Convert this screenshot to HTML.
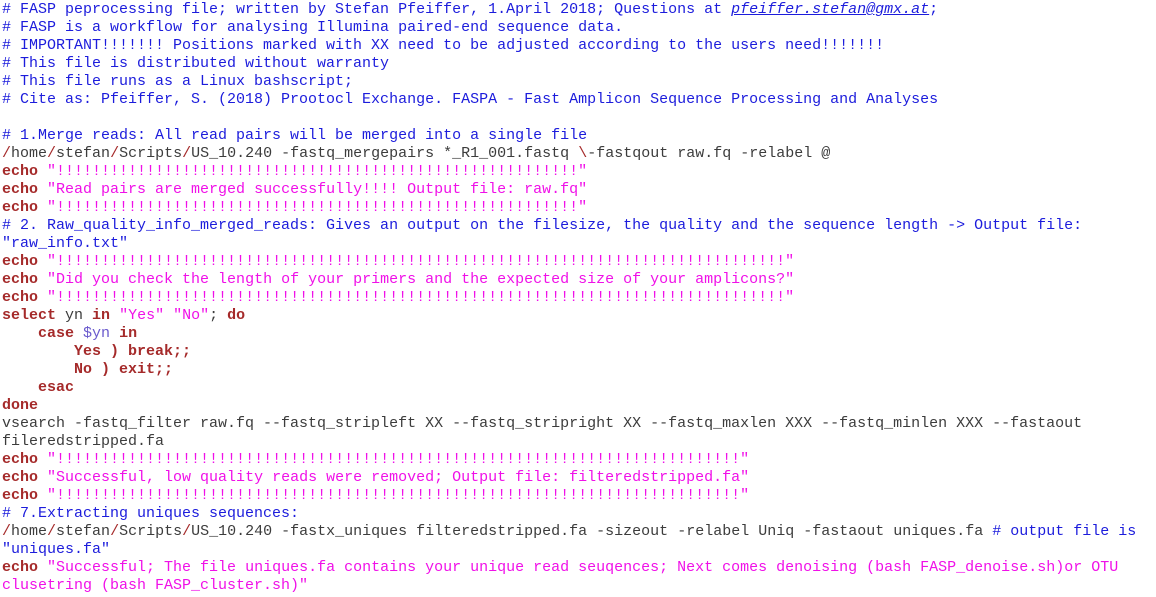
<!DOCTYPE html>
<html><head><meta charset="utf-8"><style>
html,body{margin:0;padding:0;background:#fff;width:1156px;height:597px;overflow:hidden}
pre{margin:0;padding:1px 0 0 2px;font-family:"Liberation Mono",monospace;font-size:15px;line-height:18px;color:#3c3c3c;white-space:pre}
.c{color:#1c1cdc}.s{color:#f010e8}.k{color:#a52a2a;font-weight:bold}.p{color:#a52a2a}.v{color:#6a5acd}
.e{font-style:italic;text-decoration:underline}
</style></head><body><pre><span class="c"># FASP peprocessing file; written by Stefan Pfeiffer, 1.April 2018; Questions at <span class="e">pfeiffer.stefan@gmx.at</span>;
# FASP is a workflow for analysing Illumina paired-end sequence data.
# IMPORTANT!!!!!!! Positions marked with XX need to be adjusted according to the users need!!!!!!!
# This file is distributed without warranty
# This file runs as a Linux bashscript;
# Cite as: Pfeiffer, S. (2018) Prootocl Exchange. FASPA - Fast Amplicon Sequence Processing and Analyses</span>

<span class="c"># 1.Merge reads: All read pairs will be merged into a single file</span>
<span class="p">/</span>home<span class="p">/</span>stefan<span class="p">/</span>Scripts<span class="p">/</span>US_10.240 -fastq_mergepairs *_R1_001.fastq <span class="p">\</span>-fastqout raw.fq -relabel @
<span class="k">echo</span> <span class="s">"!!!!!!!!!!!!!!!!!!!!!!!!!!!!!!!!!!!!!!!!!!!!!!!!!!!!!!!!!!"</span>
<span class="k">echo</span> <span class="s">"Read pairs are merged successfully!!!! Output file: raw.fq"</span>
<span class="k">echo</span> <span class="s">"!!!!!!!!!!!!!!!!!!!!!!!!!!!!!!!!!!!!!!!!!!!!!!!!!!!!!!!!!!"</span>
<span class="c"># 2. Raw_quality_info_merged_reads: Gives an output on the filesize, the quality and the sequence length -&gt; Output file:
"raw_info.txt"</span>
<span class="k">echo</span> <span class="s">"!!!!!!!!!!!!!!!!!!!!!!!!!!!!!!!!!!!!!!!!!!!!!!!!!!!!!!!!!!!!!!!!!!!!!!!!!!!!!!!!!"</span>
<span class="k">echo</span> <span class="s">"Did you check the length of your primers and the expected size of your amplicons?"</span>
<span class="k">echo</span> <span class="s">"!!!!!!!!!!!!!!!!!!!!!!!!!!!!!!!!!!!!!!!!!!!!!!!!!!!!!!!!!!!!!!!!!!!!!!!!!!!!!!!!!"</span>
<span class="k">select</span> yn <span class="k">in</span> <span class="s">"Yes"</span> <span class="s">"No"</span>; <span class="k">do</span>
    <span class="k">case</span> <span class="v">$yn</span> <span class="k">in</span>
        <span class="k">Yes ) break;;</span>
        <span class="k">No ) exit;;</span>
    <span class="k">esac</span>
<span class="k">done</span>
vsearch -fastq_filter raw.fq --fastq_stripleft XX --fastq_stripright XX --fastq_maxlen XXX --fastq_minlen XXX --fastaout
fileredstripped.fa
<span class="k">echo</span> <span class="s">"!!!!!!!!!!!!!!!!!!!!!!!!!!!!!!!!!!!!!!!!!!!!!!!!!!!!!!!!!!!!!!!!!!!!!!!!!!!!"</span>
<span class="k">echo</span> <span class="s">"Successful, low quality reads were removed; Output file: filteredstripped.fa"</span>
<span class="k">echo</span> <span class="s">"!!!!!!!!!!!!!!!!!!!!!!!!!!!!!!!!!!!!!!!!!!!!!!!!!!!!!!!!!!!!!!!!!!!!!!!!!!!!"</span>
<span class="c"># 7.Extracting uniques sequences:</span>
<span class="p">/</span>home<span class="p">/</span>stefan<span class="p">/</span>Scripts<span class="p">/</span>US_10.240 -fastx_uniques filteredstripped.fa -sizeout -relabel Uniq -fastaout uniques.fa <span class="c"># output file is
"uniques.fa"</span>
<span class="k">echo</span> <span class="s">"Successful; The file uniques.fa contains your unique read seuqences; Next comes denoising (bash FASP_denoise.sh)or OTU
clusetring (bash FASP_cluster.sh)"</span></pre></body></html>
